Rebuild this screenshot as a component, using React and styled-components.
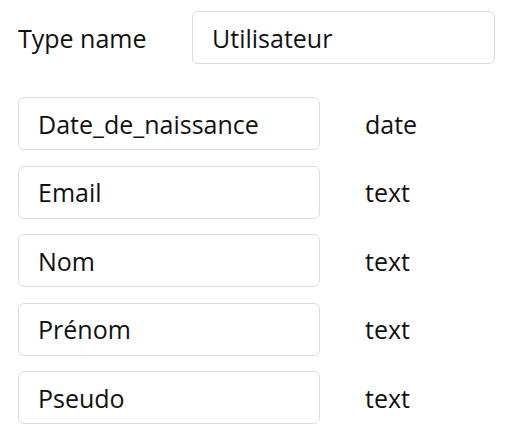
import React from "react";
import styled, { createGlobalStyle } from "styled-components";

const GlobalStyle = createGlobalStyle`
  body {
    margin: 0;
    background: #ffffff;
    font-family: "Open Sans", "Noto Sans", sans-serif;
    color: #111;
  }
`;

const Page = styled.div`
  padding: 11px 13px 0 18px;
  display: flex;
  flex-direction: column;
  gap: 33px;
`;

const Header = styled.div`
  display: flex;
  align-items: center;
`;

const Label = styled.div`
  width: 174px;
  font-size: 25px;
`;

const Box = styled.div`
  box-sizing: border-box;
  width: ${(p) => p.width}px;
  height: 53px;
  border: 1px solid #dcdcdc;
  border-radius: 6px;
  display: flex;
  align-items: center;
  padding-left: 19px;
  font-size: 25px;
`;

const List = styled.div`
  display: flex;
  flex-direction: column;
  gap: 15.5px;
`;

const Row = styled.div`
  display: flex;
  align-items: center;
`;

const TypeCell = styled.div`
  margin-left: 45px;
  font-size: 25px;
`;

const fields = [
  ["Date_de_naissance", "date"],
  ["Email", "text"],
  ["Nom", "text"],
  ["Prénom", "text"],
  ["Pseudo", "text"],
];

export default function App() {
  return (
    <>
      <GlobalStyle />
      <Page>
        <Header>
          <Label>Type name</Label>
          <Box width={303}>Utilisateur</Box>
        </Header>
        <List>
          {fields.map(([name, type]) => (
            <Row key={name}>
              <Box width={302}>{name}</Box>
              <TypeCell>{type}</TypeCell>
            </Row>
          ))}
        </List>
      </Page>
    </>
  );
}
